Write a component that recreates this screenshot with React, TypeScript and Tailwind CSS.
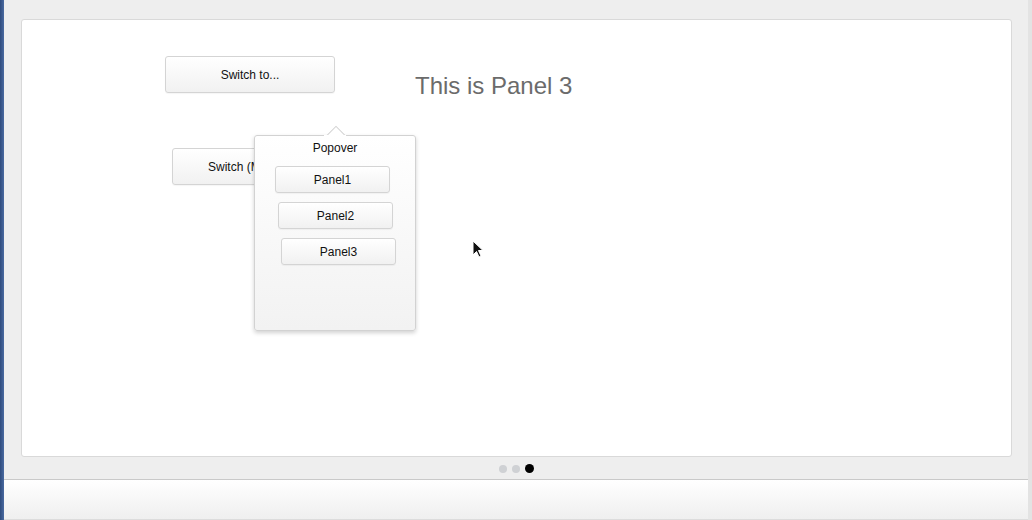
import React from "react"

const font = { fontFamily: '"Liberation Sans", Arial, sans-serif' }

function GlossButton({ label, className }: { label: string; className: string }) {
  return (
    <button
      className={`flex items-center justify-center whitespace-nowrap rounded-[3px] border border-[#d4d4d4] bg-gradient-to-b from-white to-[#f1f1f1] text-[12px] text-[#111] shadow-[0_1px_1px_rgba(0,0,0,0.04)] ${className}`}
    >
      {label}
    </button>
  )
}

function Cursor() {
  return (
    <svg width="14" height="20" viewBox="0 0 14 20" className="absolute left-[472px] top-[240px]">
      <path d="M1 1 L1 15 L4.5 11.5 L7 17 L9 16 L6.5 10.5 L11 10.5 Z" fill="#111" stroke="#fff" strokeWidth="1" />
    </svg>
  )
}

export default function App() {
  return (
    <div className="relative flex h-[520px] w-[1032px] overflow-hidden bg-[#eeeeee]" style={font}>
      {/* left window edge */}
      <div className="w-[4px] bg-gradient-to-r from-[#2f4c7e] to-[#4a6aa0]" />

      <div className="flex flex-1 flex-col">
        <div className="flex flex-1 flex-col pl-[17px] pr-[16px] pt-[19px]">
          {/* main panel */}
          <div className="flex h-[438px] rounded-[3px] border border-[#d9d9d9] bg-white">
            <div className="flex flex-col pl-[143px] pt-[36px]">
              <GlossButton label="Switch to..." className="h-[37px] w-[170px]" />
              <GlossButton label="Switch (Modeless)" className="ml-[7px] mt-[55px] h-[37px] w-[170px]" />
            </div>
            <h1 className="ml-[73px] mt-[52px] text-[24px] leading-[28px] text-[#6b6b6b]">This is Panel 3</h1>
          </div>

          {/* page dots */}
          <div className="flex h-[22px] items-center justify-center gap-[5px] pt-[1px]">
            <span className="h-[8px] w-[8px] rounded-full bg-[#cfd1d4]" />
            <span className="h-[8px] w-[8px] rounded-full bg-[#cfd1d4]" />
            <span className="h-[9px] w-[9px] rounded-full bg-black" />
          </div>
        </div>

        {/* bottom toolbar */}
        <div className="h-[41px] border-t border-[#c9c9c9] border-b border-b-[#dcdcdc] bg-gradient-to-b from-white to-[#efefef]" />
      </div>

      {/* right window edge */}
      <div className="w-[4px] bg-[#e3e3e3]" />

      {/* popover */}
      <div className="absolute left-[254px] top-[124px] w-[162px]">
        <div className="relative flex justify-center">
          <div className="relative ml-[2px] h-[12px] w-[24px] overflow-hidden">
            <div className="absolute left-[4px] top-[5px] h-[16px] w-[16px] rotate-45 border border-[#d2d2d2] bg-white" />
          </div>
        </div>
        <div className="-mt-[1px] flex h-[196px] flex-col rounded-[3px] border border-[#d2d2d2] bg-gradient-to-b from-white to-[#f2f2f2] shadow-[0_2px_4px_rgba(0,0,0,0.18)]">
          <div className="relative -mt-[1px] mx-auto h-[1px] w-[22px] bg-white" />
          <div className="pt-[5px] text-center text-[12px] leading-[14px] text-[#111]">Popover</div>
          <GlossButton label="Panel1" className="ml-[20px] mt-[11px] h-[27px] w-[115px]" />
          <GlossButton label="Panel2" className="ml-[23px] mt-[9px] h-[27px] w-[115px]" />
          <GlossButton label="Panel3" className="ml-[26px] mt-[9px] h-[27px] w-[115px]" />
        </div>
      </div>

      <Cursor />
    </div>
  )
}
